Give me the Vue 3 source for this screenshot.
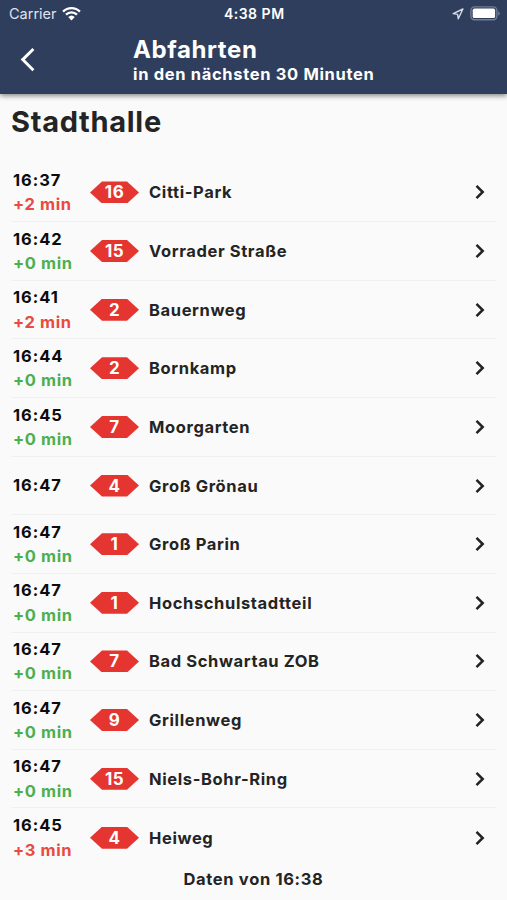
<template>
	<div class="screen">
		<header class="app-header">
			<div class="status-bar">
				<div class="status-left">
					<span class="carrier">Carrier</span>
					<svg class="wifi" width="19" height="15" viewBox="0 0 18 14">
						<path
							d="M1 5.2a11.4 11.4 0 0 1 16 0M3.8 8a7.4 7.4 0 0 1 10.4 0"
							fill="none"
							stroke="#fff"
							stroke-width="2.2"
						/>
						<path d="M9 13.6 5.9 10.3a4.5 4.5 0 0 1 6.2 0z" fill="#fff" />
					</svg>
				</div>
				<span class="status-time">4:38 PM</span>
				<div class="status-right">
					<svg class="location" width="12" height="12" viewBox="0 0 12 12">
						<path
							d="M10.9 1 1.2 5.6l4.4.8.7 4.4z"
							fill="none"
							stroke="#d3dae6"
							stroke-width="1.4"
							stroke-linejoin="round"
						/>
					</svg>
					<svg class="battery" width="30" height="15" viewBox="0 0 30 15">
						<rect
							x="0.9"
							y="0.9"
							width="26"
							height="12.8"
							rx="3.6"
							fill="none"
							stroke="#727c95"
							stroke-width="1.4"
						/>
						<rect x="2.7" y="2.6" width="22.4" height="9.4" rx="1.6" fill="#fff" />
						<path d="M28.2 5.2q1.7.8 1.7 2.2t-1.7 2.2z" fill="#727c95" />
					</svg>
				</div>
			</div>
			<div class="toolbar">
				<button class="back" type="button" aria-label="Zurück">
					<svg width="16" height="26" viewBox="0 0 16 26">
						<path d="M13.4 2 2.7 12.6l10.7 10.6" fill="none" stroke="#fff" stroke-width="2.9" />
					</svg>
				</button>
				<div class="heading">
					<h1>Abfahrten</h1>
					<p>in den nächsten 30 Minuten</p>
				</div>
			</div>
		</header>

		<main class="content">
			<h2>Stadthalle</h2>
			<ul class="departures">
				<li v-for="(item, index) in departures" :key="index">
					<div class="time">
						<span class="clock">{{ item.time }}</span>
						<span v-if="item.delay !== null" :class="item.delay > 0 ? 'late' : 'on-time'"
							>+{{ item.delay }} min</span
						>
					</div>
					<div class="line">{{ item.line }}</div>
					<div class="destination">{{ item.destination }}</div>
					<svg class="chevron" width="10" height="16" viewBox="0 0 10 16">
						<path d="M1.5 1.8 7.7 8l-6.2 6.2" fill="none" stroke="#222" stroke-width="2.5" />
					</svg>
				</li>
			</ul>
			<p class="updated">Daten von 16:38</p>
		</main>
	</div>
</template>

<script setup>
import { ref } from "vue";

const departures = ref([
	{ time: "16:37", delay: 2, line: "16", destination: "Citti-Park" },
	{ time: "16:42", delay: 0, line: "15", destination: "Vorrader Straße" },
	{ time: "16:41", delay: 2, line: "2", destination: "Bauernweg" },
	{ time: "16:44", delay: 0, line: "2", destination: "Bornkamp" },
	{ time: "16:45", delay: 0, line: "7", destination: "Moorgarten" },
	{ time: "16:47", delay: null, line: "4", destination: "Groß Grönau" },
	{ time: "16:47", delay: 0, line: "1", destination: "Groß Parin" },
	{ time: "16:47", delay: 0, line: "1", destination: "Hochschulstadtteil" },
	{ time: "16:47", delay: 0, line: "7", destination: "Bad Schwartau ZOB" },
	{ time: "16:47", delay: 0, line: "9", destination: "Grillenweg" },
	{ time: "16:47", delay: 0, line: "15", destination: "Niels-Bohr-Ring" },
	{ time: "16:45", delay: 3, line: "4", destination: "Heiweg" },
]);
</script>

<style>
body {
	margin: 0;
	background-color: #fafafa;
}
</style>

<style scoped>
.screen {
	height: 900px;
	overflow: hidden;
	font-family: Inter, sans-serif;
	font-weight: 700;
	font-optical-sizing: none;
	color: #242424;
	background-color: #fafafa;
}

h1,
h2,
p,
ul {
	margin: 0;
	padding: 0;
}

.app-header {
	height: 94px;
	color: #fff;
	background-color: #2f3e5c;
	box-shadow: 0 2px 5px rgba(0, 0, 0, 0.45);
}

.status-bar {
	display: grid;
	grid-template-columns: 1fr auto 1fr;
	align-items: center;
	height: 27px;
	padding: 0 7.5px 0 9px;
	font-size: 14px;
	font-weight: 600;
	letter-spacing: 0.5px;
}

.status-left,
.status-right {
	display: flex;
	align-items: center;
}

.status-left {
	gap: 5px;
}

.carrier {
	font-weight: 400;
	font-size: 14.5px;
	letter-spacing: 0;
	color: #dfe4ee;
}

.status-right {
	justify-content: flex-end;
	gap: 5.5px;
}

.toolbar {
	display: flex;
	height: 67px;
}

.back {
	display: flex;
	width: 133px;
	padding: 20px 0 0 20px;
	border: none;
	background: none;
}

.heading {
	padding-top: 8px;
}

.heading h1 {
	font-size: 24px;
	font-weight: 700;
	line-height: 29px;
	letter-spacing: 0.6px;
}

.heading p {
	font-size: 16.5px;
	line-height: 20px;
	letter-spacing: 0.67px;
}

.content {
	padding: 9.6px 11px 0;
}

.content h2 {
	height: 60px;
	font-size: 29px;
	font-weight: 700;
	line-height: 36px;
	letter-spacing: 0.7px;
}

.departures {
	list-style: none;
}

.departures li {
	display: flex;
	align-items: center;
	height: 58.64px;
	padding: 0 11px 0 2px;
	border-bottom: 1px solid #f0f0f0;
	box-sizing: border-box;
	font-size: 16.5px;
	letter-spacing: 0.62px;
}

.departures li:last-child {
	border-bottom: none;
}

.time {
	display: flex;
	flex-direction: column;
	width: 77px;
	line-height: 24.4px;
	color: #0c0c0c;
}

.clock {
	letter-spacing: 0.95px;
}

.late {
	color: #ea4a40;
}

.on-time {
	color: #4caf50;
}

.line {
	width: 49px;
	height: 22px;
	margin-right: 10px;
	color: #fff;
	background-color: #e53531;
	clip-path: polygon(0 50%, 12px 0, 37px 0, 100% 50%, 37px 100%, 12px 100%);
	font-size: 17px;
	font-weight: 700;
	line-height: 22px;
	letter-spacing: 0.5px;
	text-align: center;
}

.destination {
	flex: 1;
}

.updated {
	font-size: 16.5px;
	line-height: 24px;
	letter-spacing: 0.67px;
	text-align: center;
}
</style>
